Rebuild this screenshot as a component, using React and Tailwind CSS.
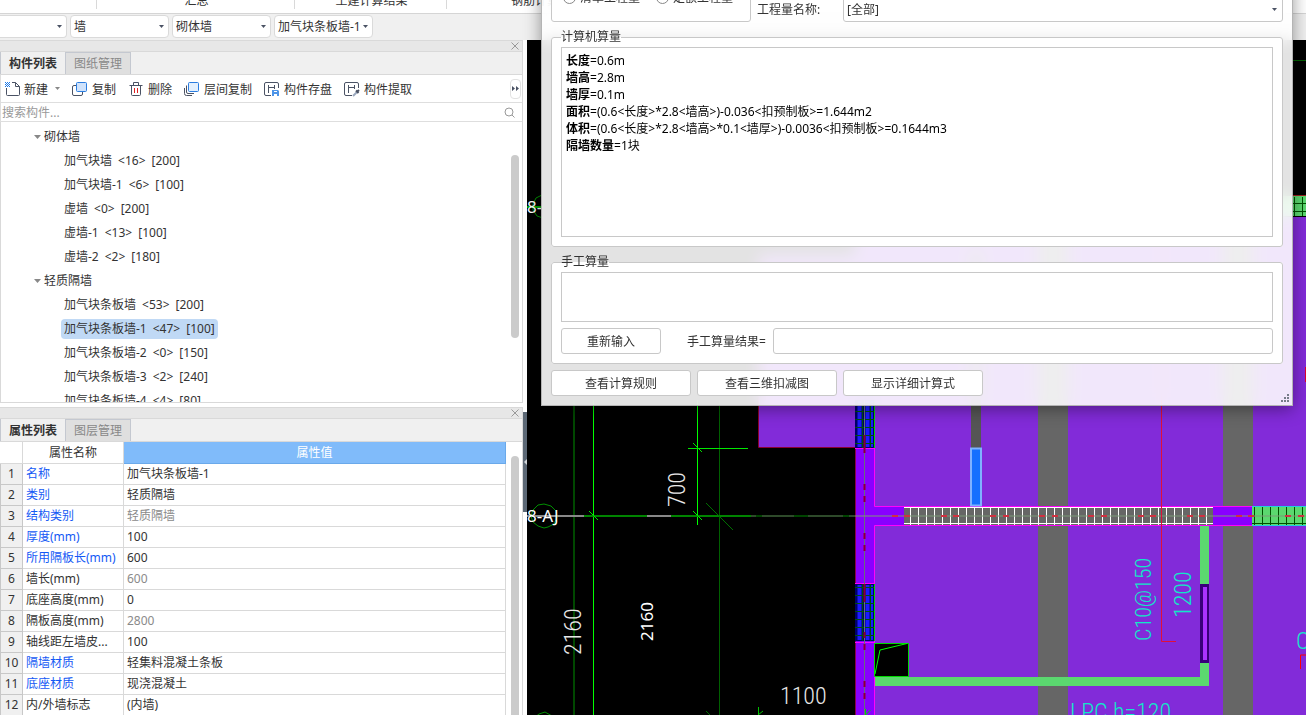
const combos = [
    { label: '楼层', value: '', width: 'w-[67px] rounded-l-none border-l-0' },
    { label: '构件大类', value: '墙', width: 'w-[99px]' },
    { label: '构件类型', value: '砌体墙', width: 'w-[99px]' },
    { label: '构件', value: '加气块条板墙-1', width: 'w-[99px]' },
];

const tree = [
    { label: '砌体墙', group: true },
    { label: '加气块墙', count: 16, size: 200 },
    { label: '加气块墙-1', count: 6, size: 100 },
    { label: '虚墙', count: 0, size: 200 },
    { label: '虚墙-1', count: 13, size: 100 },
    { label: '虚墙-2', count: 2, size: 180 },
    { label: '轻质隔墙', group: true },
    { label: '加气块条板墙', count: 53, size: 200 },
    { label: '加气块条板墙-1', count: 47, size: 100, selected: true },
    { label: '加气块条板墙-2', count: 0, size: 150 },
    { label: '加气块条板墙-3', count: 2, size: 240 },
    { label: '加气块条板墙-4', count: 4, size: 80 },
];

const properties = [
    { name: '名称', value: '加气块条板墙-1', blue: true },
    { name: '类别', value: '轻质隔墙', blue: true },
    { name: '结构类别', value: '轻质隔墙', blue: true, muted: true },
    { name: '厚度(mm)', value: '100', blue: true },
    { name: '所用隔板长(mm)', value: '600', blue: true },
    { name: '墙长(mm)', value: '600', muted: true },
    { name: '底座高度(mm)', value: '0' },
    { name: '隔板高度(mm)', value: '2800', muted: true },
    { name: '轴线距左墙皮...', value: '100' },
    { name: '隔墙材质', value: '轻集料混凝土条板', blue: true },
    { name: '底座材质', value: '现浇混凝土', blue: true },
    { name: '内/外墙标志', value: '(内墙)' },
];

const results = [
    ['长度', '=0.6m'],
    ['墙高', '=2.8m'],
    ['墙厚', '=0.1m'],
    ['面积', '=(0.6<长度>*2.8<墙高>)-0.036<扣预制板>=1.644m2'],
    ['体积', '=(0.6<长度>*2.8<墙高>*0.1<墙厚>)-0.0036<扣预制板>=0.1644m3'],
    ['隔墙数量', '=1块'],
];

function Caret({ className = '' }) {
    return (
        <svg className={className} width="5" height="3" viewBox="0 0 5 3" aria-hidden="true">
            <path d="M0 0h5L2.5 3z" fill="currentColor" />
        </svg>
    );
}

function NewIcon() {
    return (
        <svg width="16" height="16" viewBox="0 0 16 16" fill="none" aria-hidden="true">
            <path d="M8 1.5h3.5l4 4v8a1 1 0 0 1-1 1h-11a1 1 0 0 1-1-1V7M11.5 1.5v4h4" stroke="#4a5264" />
            <path d="M1 1h1v1H1zM3 1h1v1H3zM5 1h1v1H5zM2 2h1v1H2zM4 2h1v1H4zM1 3h1v1H1zM3 3h1v1H3zM5 3h1v1H5zM2 4h1v1H2zM4 4h1v1H4zM1 5h1v1H1zM3 5h1v1H3zM5 5h1v1H5z" fill="#1b78e8" />
        </svg>
    );
}

function CopyIcon() {
    return (
        <svg width="16" height="16" viewBox="0 0 16 16" fill="none" aria-hidden="true">
            <path d="M4 4.5H2A1.5 1.5 0 0 0 .5 6v7A1.5 1.5 0 0 0 2 14.5h7a1.5 1.5 0 0 0 1.5-1.5v-2" stroke="#4a5264" />
            <rect x="4.5" y="1.5" width="10" height="9" rx="1" fill="#cfe2fb" stroke="#2b7de0" />
        </svg>
    );
}

function TrashIcon() {
    return (
        <svg width="16" height="16" viewBox="0 0 16 16" fill="none" aria-hidden="true">
            <path d="M1.5 4.5h13M5.5 4V1.500h5V4M3.500 4.500v9a1 1 0 0 0 1 1h7a1 1 0 0 0 1-1v-9" stroke="#4a5264" />
            <path d="M6.5 7v5M9.5 7v5" stroke="#e02020" />
        </svg>
    );
}

function LayersIcon() {
    return (
        <svg width="16" height="16" viewBox="0 0 16 16" fill="none" aria-hidden="true">
            <path d="M.5 7v5.5a2 2 0 0 0 2 2H8M2.5 4.5V11A1.5 1.5 0 0 0 4 12.5h6" stroke="#4a5264" />
            <rect x="4.5" y="1.5" width="10" height="9" rx="1" fill="#e3f0fe" stroke="#2b7de0" />
        </svg>
    );
}

function SaveIcon() {
    return (
        <svg width="16" height="16" viewBox="0 0 16 16" fill="none" aria-hidden="true">
            <path d="M7 14.5H2A1.5 1.5 0 0 1 .5 13V3A1.5 1.5 0 0 1 2 1.5h11A1.5 1.5 0 0 1 14.5 3v4M4.5 4v8M4.5 6.5H10M10.5 4v4" stroke="#4a5264" />
            <path d="M8 9h6l1 1v5H8z" fill="#4d94e8" />
            <path d="M10 10h3v1h-3zM10 13h3v2h-3z" fill="#fff" />
        </svg>
    );
}

function ExtractIcon() {
    return (
        <svg width="16" height="16" viewBox="0 0 16 16" fill="none" aria-hidden="true">
            <path d="M8 14.5H2A1.5 1.5 0 0 1 .5 13V3A1.5 1.5 0 0 1 2 1.5h11A1.5 1.5 0 0 1 14.5 3v4M4.5 4v8M4.5 6.5H10M10.5 4v4" stroke="#4a5264" />
            <path d="M9 15l4-4" stroke="#9aa8bd" strokeWidth="2" />
            <path d="M12 9.500l2.500 2.500M13 11l2-2" stroke="#4a5264" strokeWidth="2" />
        </svg>
    );
}

function ToolButton({ icon, label, children }) {
    return (
        <button type="button" className="flex items-center gap-1 whitespace-nowrap">
            {icon}
            <span className="pt-[2px]">{label}</span>
            {children}
        </button>
    );
}

function PanelHeader({ active, other }) {
    return (
        <>
            <div className="flex h-3 shrink-0 items-center justify-end border-y border-[#d9d9d9] bg-[#e7e7e7] pr-[3px]">
                <button type="button" aria-label="关闭">
                    <svg width="8" height="8" viewBox="0 0 8 8" aria-hidden="true">
                        <path d="M.5.5l7 7M7.500.5l-7 7" stroke="#999" />
                    </svg>
                </button>
            </div>
            <div className="flex h-[23px] shrink-0 border-b border-[#d9d9d9] bg-[#f0f0f0]" role="tablist">
                <button type="button" role="tab" aria-selected="true" className="w-[65px] border-l border-[#c4c8d0] pt-[2px] font-bold">
                    {active}
                </button>
                <button type="button" role="tab" aria-selected="false" className="w-[66px] border border-b-0 border-[#c4c8d0] bg-[#dfdfdf] pt-px text-[#888]">
                    {other}
                </button>
            </div>
        </>
    );
}

function ComponentPanel() {
    return (
        <section className="flex h-[363px] shrink-0 flex-col border-r border-b border-[#d9d9d9] bg-white">
            <PanelHeader active="构件列表" other="图纸管理" />
            <div className="flex h-7 shrink-0 items-center gap-3 border-b border-l border-[#dedede] pl-[3px]">
                <ToolButton icon={<NewIcon />} label="新建">
                    <Caret className="ml-[3px] text-[#888]" />
                </ToolButton>
                <ToolButton icon={<CopyIcon />} label="复制" />
                <ToolButton icon={<TrashIcon />} label="删除" />
                <ToolButton icon={<LayersIcon />} label="层间复制" />
                <ToolButton icon={<SaveIcon />} label="构件存盘" />
                <ToolButton icon={<ExtractIcon />} label="构件提取" />
                <button type="button" aria-label="更多" className="mr-px ml-auto flex h-5 w-[11px] items-center justify-center rounded-sm border border-[#e2e2e2]">
                    <svg width="7" height="5" viewBox="0 0 7 5" aria-hidden="true">
                        <path d="M0 0l3 2.500L0 5zM4 0l3 2.500L4 5z" fill="#4a5264" />
                    </svg>
                </button>
            </div>
            <label className="flex h-[19px] shrink-0 items-center border-b border-l border-[#dedede] pr-[7px] pl-px">
                <input type="text" aria-label="搜索构件" placeholder="搜索构件..." className="min-w-0 flex-1 pt-[2px] outline-none placeholder:text-[#999]" />
                <svg width="11" height="11" viewBox="0 0 11 11" fill="none" stroke="#999" aria-hidden="true">
                    <circle cx="5" cy="5" r="4" />
                    <path d="M8 8l2.500 2.500" />
                </svg>
            </label>
            <div className="flex min-h-0 flex-1 justify-between border-l border-[#d9d9d9]">
                <ul className="overflow-hidden pt-[3px]">
                    {tree.map((node) =>
                        node.group ? (
                            <li key={node.label} className="flex h-6 items-center gap-[3px] pl-[33px]">
                                <svg width="7" height="4" viewBox="0 0 7 4" aria-hidden="true">
                                    <path d="M0 0h7L3.500 4z" fill="#888" />
                                </svg>
                                {node.label}
                            </li>
                        ) : (
                            <li key={node.label} className="flex h-6 items-center pl-[60px]">
                                <div className={`flex gap-[6px] px-[3px] py-[2px] ${node.selected ? 'rounded-sm bg-[#c0d9f5]' : ''}`}>
                                    <span>{node.label}</span>
                                    <span>&lt;{node.count}&gt;</span>
                                    <span>[{node.size}]</span>
                                </div>
                            </li>
                        )
                    )}
                </ul>
                <div className="mt-[33px] mr-[3px] h-[183px] w-2 rounded-full bg-[#cbcbcb]" />
            </div>
        </section>
    );
}

function PropertyPanel() {
    return (
        <section className="mt-1 flex min-h-0 flex-1 flex-col border-r border-[#d9d9d9] bg-white">
            <PanelHeader active="属性列表" other="图层管理" />
            <div className="flex min-h-0 flex-1 overflow-hidden">
                <table className="h-fit flex-1 table-fixed border-collapse">
                    <colgroup>
                        <col className="w-[22px]" />
                        <col className="w-[101px]" />
                        <col />
                    </colgroup>
                    <thead>
                        <tr className="h-[21px]">
                            <th className="border-r border-b border-[#d9d9d9]" />
                            <th className="border-r border-b border-[#d9d9d9] pt-px font-normal">属性名称</th>
                            <th className="border border-t-0 border-[#6aa9ea] bg-[#80bbfa] pt-px font-normal text-white">属性值</th>
                        </tr>
                    </thead>
                    <tbody>
                        {properties.map((row, index) => (
                            <tr key={row.name} className="h-[21px]">
                                <td className="border border-t-0 border-[#c8c8c8] bg-[#f0f0f0] text-center">{index + 1}</td>
                                <td className={`border-r border-b border-[#d9d9d9] pl-[3px] whitespace-nowrap ${row.blue ? 'text-[#1459f5]' : ''}`}>
                                    {row.name}
                                </td>
                                <td className={`border-r border-b border-[#d9d9d9] pl-[3px] ${row.muted ? 'text-[#8a8a8a]' : ''}`}>{row.value}</td>
                            </tr>
                        ))}
                    </tbody>
                </table>
                <div className="mt-[14px] mr-[3px] ml-[5px] w-2 rounded-t-full bg-[#cbcbcb]" />
            </div>
        </section>
    );
}

function WallWindow({ y, height }) {
    return (
        <g>
            <rect x="855" y={y} width="20" height={height} fill="#00006a" />
            <path d={`M859.5 ${y + 1}v${height - 2}M867.5 ${y + 1}v${height - 2}`} stroke="#1b1bff" strokeWidth="4" />
            <path d={`M872 ${y + 1}v${height - 2}`} stroke="#1b1bff" strokeWidth="2" />
            <rect x="855" y={y} width="20" height={height} fill="url(#darkGrid)" />
            <path d={`M874.5 ${y}v${height}`} stroke="#00d800" />
        </g>
    );
}

function Drawing() {
    return (
        <svg className="absolute inset-0 h-full w-full" viewBox="527 40 779 675" preserveAspectRatio="xMinYMin slice" fill="none" aria-label="平面图">
            <defs>
                <pattern id="darkGrid" x="862" y="411" width="8" height="8" patternUnits="userSpaceOnUse">
                    <path d="M0 .5h8M.5 0v8" stroke="#005010" />
                </pattern>
                <pattern id="whiteGrid" x="910" y="500" width="8" height="30" patternUnits="userSpaceOnUse">
                    <path d="M.5 0v30" stroke="#fff" />
                </pattern>
                <pattern id="greenGrid" x="1254" y="500" width="8" height="30" patternUnits="userSpaceOnUse">
                    <path d="M.5 0v30" stroke="#005000" />
                </pattern>
            </defs>
            <rect x="527" y="40" width="779" height="675" fill="#000" />

            {/* slabs and beams */}
            <path d="M758 255h97v192h-97zM855 217h451v498H875V448h-20z" fill="#822bd9" />
            <path d="M758.5 255v192.500H855" stroke="#8a0030" />
            <path d="M1038 217h30v498h-30zM1223 217h30v498h-30z" fill="#666" />
            <path d="M971 250h10v198h-10z" fill="#555" />
            <path d="M855 196h451v20H855z" fill="#5bd86f" />
            <path d="M1294.5 197v19M1302.5 197v19M1290 203.5h16M1290 211.5h16" stroke="#005000" />
            <path d="M1290 195.5h16" stroke="#a02020" />
            <path d="M1290 60.5h16" stroke="#006000" />

            {/* left grid lines and dimensions */}
            <path d="M574 400v315" stroke="#004800" strokeWidth="2" />
            <path d="M719.5 400v315" stroke="#006000" />
            <path d="M593.5 400v315M697.5 400v125" stroke="#00ff00" />
            <path d="M527 516h57M647 516h24" stroke="#888" strokeWidth="2" />
            <path d="M584 516h63M671 516h80" stroke="#008400" strokeWidth="2" />
            <path d="M751 516h104" stroke="#2e4a2a" strokeWidth="2" />
            <path d="M756 516h6M794 516h14M843 516h6" stroke="#004400" strokeWidth="2" />
            <path d="M688 448.5h60M589 511l9 9M693 443l9 9M693 511l9 9" stroke="#00e800" />
            <path d="M706 503l27 27M706 711l5 5" stroke="#007000" />
            <path d="M544 504l7 2 5 5 1 6-3 7-6 3-4 1-6-2-5-4-2-6 2-6 5-5z" stroke="#009000" />
            <path d="M542 195l-6 3-3 6v6l4 6 6 2M534 718l5-4 6-2 7 4" stroke="#009000" />
            <path d="M527 207h16" stroke="#00a000" strokeWidth="2" />
            <path d="M758.5 707v8M758 715l5-4" stroke="#00c000" />
            <g fill="#fff" fontFamily='"Noto Sans", sans-serif'>
                <text x="527" y="522" fontSize="17">8-AJ</text>
                <text x="527" y="213" fontSize="17">8-</text>
                <text transform="translate(653 641) rotate(-90)" fontSize="17">2160</text>
            </g>
            <g fill="#e8e8e8" fontFamily='"Roboto Condensed", "Liberation Sans Narrow", sans-serif' fontWeight="300" fontSize="24">
                <text transform="translate(581 655) rotate(-90)">2160</text>
                <text transform="translate(685 507) rotate(-90)">700</text>
                <text x="780" y="704">1100</text>
            </g>

            {/* vertical wall with its windows */}
            <path d="M855 448h20v58h29v20h-29v189h-20z" fill="#8800ff" />
            <path d="M855.5 448v267" stroke="#8a0050" />
            <path d="M874.5 448v58.5H1252M874.5 715V525.5H1252M855 448.5h20M855 583.5h20M855 642.5h20" stroke="#ff00ff" />
            <WallWindow y={400} height={48} />
            <WallWindow y={584} height={57} />
            <path d="M864.5 400v315" stroke="#65707a" />
            <path d="M864.5 435v18M864.5 484v6M864.5 496v6M864.5 533v6M864.5 545v6M864.5 584v18M864.5 632v6M864.5 644v6M864.5 681v6M864.5 693v6" stroke="#8a0030" strokeWidth="2" />
            <path d="M865.5 709v6l5-5" stroke="#00d800" />

            {/* horizontal wall */}
            <path d="M904 507h309v18H904z" fill="#666" />
            <path d="M904 507h309v18H904z" fill="url(#whiteGrid)" />
            <path d="M904 507.5h309M904 523.5h309" stroke="#fff" />
            <path d="M1213 507h39v18h-39z" fill="#8800ff" />
            <path d="M1252 507h54v18h-54z" fill="#5bd86f" />
            <path d="M1252 507h54v18h-54z" fill="url(#greenGrid)" />
            <path d="M1252 523.5h54" stroke="#005000" />
            <path d="M1252 506.5h54M1252 525.5h54" stroke="#20d0e0" />
            <path d="M855 516h451" stroke="#7d9a78" />
            <path d="M892 516h6M904 516h6M941 516h6M953 516h6M990 516h6M1003 516h6M1039 516h6M1052 516h6M1088 516h6M1101 516h6M1138 516h6M1150 516h6M1187 516h6M1199 516h6M1236 516h6M1248 516h6M1285 516h6M1298 516h6" stroke="#d03040" strokeWidth="2" />

            {/* selected partition */}
            <rect x="971" y="448.500" width="10" height="57" fill="#1470ff" stroke="#7fb2ff" strokeWidth="2" />

            {/* light partitions */}
            <path d="M1200 526h9v160H875v-9h325z" fill="#5bd86f" />
            <path d="M1200 584h9v79h-9z" fill="#38007a" />
            <path d="M1203 587h4v73h-4z" fill="#aa33ff" />
            <path d="M874.5 643.5h34v33h-34z" fill="#000" stroke="#00d800" />
            <path d="M875 674l5-24 27-6.500" stroke="#00ff00" />

            {/* rebar annotations */}
            <path d="M1161.5 217V641.5H1176" stroke="#e01038" />
            <path d="M1306 367v15" stroke="#e00030" strokeWidth="2" />
            <path d="M1300.5 669v-14h6" stroke="#ff0000" />
            <g fill="#10e8c8" fontFamily='"Roboto Condensed", "Liberation Sans Narrow", sans-serif' fontWeight="300" fontSize="24">
                <text transform="translate(1151 641) rotate(-90)" fontSize="22">C10@150</text>
                <text transform="translate(1191 618) rotate(-90)">1200</text>
                <text x="1296" y="649">C</text>
                <text x="1070" y="720">LPC h=120</text>
            </g>
        </svg>
    );
}

function QuantityDialog() {
    return (
        <div
            role="dialog"
            aria-label="查看工程量计算式"
            className="absolute -top-5 right-[13px] left-[541px] border border-t-0 border-[#b4b4b4] bg-white/89 px-[9px] pb-[9px] shadow-[0_3px_16px_rgba(0,0,0,0.4)] backdrop-blur-sm"
        >
            <div className="flex h-[42px] items-end">
                <div className="flex h-full w-[200px] shrink-0 items-center gap-4 rounded-[3px] border border-[#c8c8c8] bg-white pb-[7px] pl-[11px]">
                    <label className="flex items-center gap-1">
                        <input type="radio" name="mode" className="size-[13px] appearance-none rounded-full border border-[#888]" />
                        清单工程量
                    </label>
                    <label className="flex items-center gap-1">
                        <input type="radio" name="mode" className="size-[13px] appearance-none rounded-full border border-[#888]" />
                        定额工程量
                    </label>
                </div>
                <label htmlFor="quantity" className="w-[92px] shrink-0 pb-1 pl-[6px] whitespace-nowrap">
                    工程量名称:
                </label>
                <div className="relative flex-1">
                    <select id="quantity" className="block h-[26px] w-full appearance-none rounded-[3px] border border-[#c8c8c8] bg-white px-[3px] pt-[2px]">
                        <option>[全部]</option>
                    </select>
                    <Caret className="pointer-events-none absolute top-3 right-[6px] text-[#4a5264]" />
                </div>
            </div>

            <fieldset className="mt-[7px] rounded-[3px] border border-[#c8c8c8] bg-white px-[9px] pt-[2px] pb-[9px]">
                <legend>计算机算量</legend>
                <div className="h-[190px] border border-[#c8c8c8] px-1 pt-1 leading-[17px] text-black">
                    {results.map(([name, formula]) => (
                        <p key={name}>
                            <b>{name}</b>
                            {formula}
                        </p>
                    ))}
                </div>
            </fieldset>

            <fieldset className="mt-[7px] rounded-[3px] border border-[#c8c8c8] bg-white px-[9px] pt-[2px] pb-[9px]">
                <legend>手工算量</legend>
                <textarea aria-label="手工算量" className="block h-[50px] w-full resize-none border border-[#c8c8c8]" />
                <div className="mt-[6px] flex items-center">
                    <button type="button" className="h-[26px] w-[100px] rounded-[3px] border border-[#c8c8c8] pt-[2px]">
                        重新输入
                    </button>
                    <label htmlFor="manual" className="w-28 pt-[2px] pl-[26px] whitespace-nowrap">
                        手工算量结果=
                    </label>
                    <input id="manual" type="text" className="h-[26px] min-w-0 flex-1 rounded-[3px] border border-[#c8c8c8]" />
                </div>
            </fieldset>

            <div className="mt-[6px] flex gap-[6px]">
                {['查看计算规则', '查看三维扣减图', '显示详细计算式'].map((label) => (
                    <button key={label} type="button" className="h-[26px] w-[140px] rounded-[3px] border border-[#c8c8c8] bg-white pt-[2px]">
                        {label}
                    </button>
                ))}
            </div>
            <svg className="absolute right-[3px] bottom-[3px]" width="8" height="8" viewBox="0 0 8 8" aria-hidden="true">
                <path d="M0 6h2v2H0zM3 6h2v2H3zM6 6h2v2H6zM3 3h2v2H3zM6 3h2v2H6zM6 0h2v2H6z" fill="#767c88" />
            </svg>
        </div>
    );
}

export default function App() {
    return (
        <div className="relative flex h-screen flex-col overflow-hidden bg-white font-['Noto_Sans','Noto_Sans_CJK_SC',sans-serif] text-[12px] leading-4 text-[#333]">
            <header className="flex h-[14px] shrink-0 items-end overflow-hidden border-b border-[#d5d5d5] pb-1 text-center whitespace-nowrap">
                <div className="h-5 w-[97px] border-r border-[#d9d9d9]" />
                <div className="h-5 w-[198px] border-r border-[#d9d9d9] pt-1 pl-[2px]">汇总</div>
                <div className="h-5 w-[152px] border-r border-[#d9d9d9] pt-1 pl-[2px]">土建计算结果</div>
                <div className="h-5 w-[200px] pt-1">钢筋计算结果</div>
            </header>

            <div className="flex h-[26px] shrink-0 gap-[3px] bg-[#f0f0f0] pt-px">
                {combos.map((combo) => (
                    <div key={combo.label} className="relative">
                        <select aria-label={combo.label} className={`block h-[23px] appearance-none rounded border border-[#dadada] bg-white pl-[3px] ${combo.width}`}>
                            <option>{combo.value}</option>
                        </select>
                        <Caret className="pointer-events-none absolute top-[10px] right-[5px] text-[#4a5264]" />
                    </div>
                ))}
            </div>

            <main className="flex min-h-0 flex-1">
                <aside className="flex w-[523px] shrink-0 flex-col">
                    <ComponentPanel />
                    <PropertyPanel />
                </aside>
                <div className="w-1 shrink-0 pt-[372px]">
                    <button type="button" aria-label="收起" className="flex h-[100px] w-full items-center bg-[#5c6875]">
                        <svg width="4" height="6" viewBox="0 0 4 6" aria-hidden="true">
                            <path d="M4 0v6L1 3z" fill="#d0d4d8" />
                        </svg>
                    </button>
                </div>
                <div className="relative min-w-0 flex-1 overflow-hidden bg-black">
                    <Drawing />
                </div>
            </main>

            <QuantityDialog />
        </div>
    );
}
